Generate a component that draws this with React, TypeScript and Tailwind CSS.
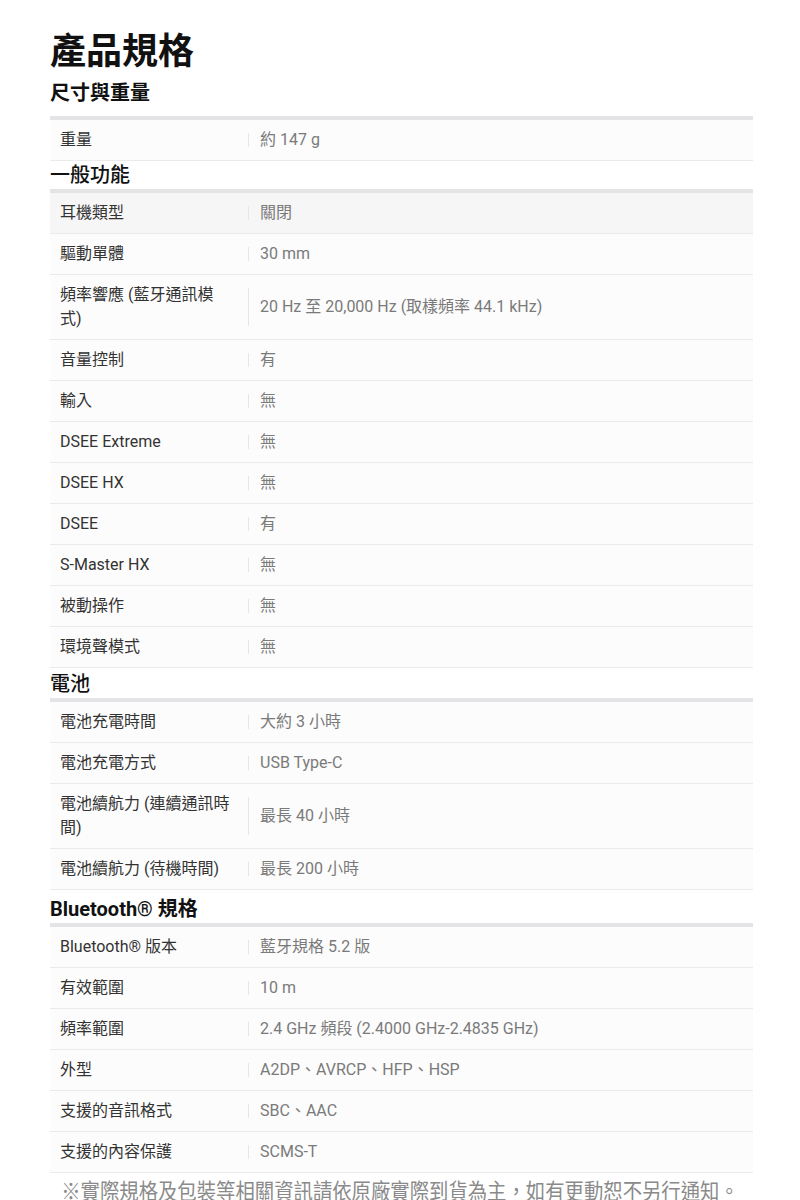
import React from "react";

type Row = { label: string; value: string; shaded?: boolean };
type Section = { title: string; rows: Row[]; titleClass: string };

const sections: Section[] = [
  {
    title: "尺寸與重量",
    titleClass: "mt-[5px] mb-[9px] font-bold",
    rows: [{ label: "重量", value: "約 147 g" }],
  },
  {
    title: "一般功能",
    titleClass: "font-medium",
    rows: [
      { label: "耳機類型", value: "關閉", shaded: true },
      { label: "驅動單體", value: "30 mm" },
      { label: "頻率響應 (藍牙通訊模式)", value: "20 Hz 至 20,000 Hz (取樣頻率 44.1 kHz)" },
      { label: "音量控制", value: "有" },
      { label: "輸入", value: "無" },
      { label: "DSEE Extreme", value: "無" },
      { label: "DSEE HX", value: "無" },
      { label: "DSEE", value: "有" },
      { label: "S-Master HX", value: "無" },
      { label: "被動操作", value: "無" },
      { label: "環境聲模式", value: "無" },
    ],
  },
  {
    title: "電池",
    titleClass: "pt-[2px] font-medium",
    rows: [
      { label: "電池充電時間", value: "大約 3 小時" },
      { label: "電池充電方式", value: "USB Type-C" },
      { label: "電池續航力 (連續通訊時間)", value: "最長 40 小時" },
      { label: "電池續航力 (待機時間)", value: "最長 200 小時" },
    ],
  },
  {
    title: "Bluetooth® 規格",
    titleClass: "pt-[5px] font-bold",
    rows: [
      { label: "Bluetooth® 版本", value: "藍牙規格 5.2 版" },
      { label: "有效範圍", value: "10 m" },
      { label: "頻率範圍", value: "2.4 GHz 頻段 (2.4000 GHz-2.4835 GHz)" },
      { label: "外型", value: "A2DP、AVRCP、HFP、HSP" },
      { label: "支援的音訊格式", value: "SBC、AAC" },
      { label: "支援的內容保護", value: "SCMS-T" },
    ],
  },
];

export default function App() {
  return (
    <div
      className="w-[800px] min-h-[1200px] bg-white text-[#222] overflow-hidden"
      style={{ fontFamily: 'Roboto, "Noto Sans CJK TC", sans-serif' }}
    >
      <div className="ml-[50px] w-[703px] pt-[30px]">
        <h1 className="text-[36px] leading-[44px] font-bold text-[#111]">產品規格</h1>

        {sections.map((section) => (
          <div key={section.title}>
            <h2 className={`text-[20px] leading-[28px] text-[#111] ${section.titleClass}`}>
              {section.title}
            </h2>
            <div className="border-t-4 border-[#e4e4e6]">
              {section.rows.map((row) => (
                <div
                  key={row.label}
                  className={`flex items-stretch py-[8px] border-b border-[#ebebeb] ${
                    row.shaded ? "bg-[#f6f6f7]" : "bg-[#fcfcfc]"
                  }`}
                >
                  <div className="w-[198px] shrink-0 pl-[10px] pr-[17px] text-[16px] leading-[24px] text-[#333]">
                    {row.label}
                  </div>
                  {/* column divider */}
                  <div className="w-px shrink-0 my-[5px] bg-[#e6e6e6]" />
                  <div className="flex-1 flex items-center pl-[11px] text-[16px] leading-[24px] text-[#7a7a7a]">
                    {row.value}
                  </div>
                </div>
              ))}
            </div>
          </div>
        ))}
      </div>

      <div className="pt-[4px] text-center leading-[30px]">
        <span className="inline-block scale-x-[0.88] text-[22px] text-[#8a8a8a] whitespace-nowrap">
          ※實際規格及包裝等相關資訊請依原廠實際到貨為主，如有更動恕不另行通知。
        </span>
      </div>
    </div>
  );
}
